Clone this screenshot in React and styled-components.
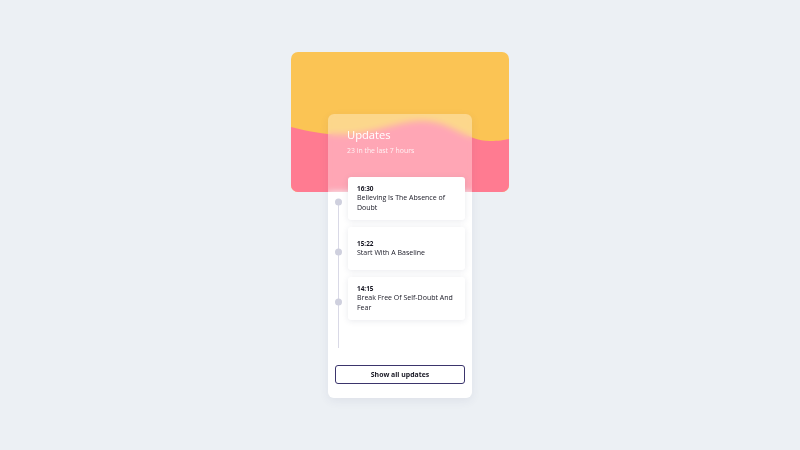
import React from "react";
import styled, { createGlobalStyle } from "styled-components";

const Global = createGlobalStyle`
  html, body { margin: 0; padding: 0; }
  body {
    background: #ecf0f4;
    font-family: "Open Sans", "Noto Sans", sans-serif;
    width: 800px;
    height: 450px;
    overflow: hidden;
  }
`;

const Stage = styled.div`
  display: flex;
  flex-direction: column;
  align-items: center;
  padding-top: 52px;
`;

const Banner = styled.div`
  width: 218px;
  height: 140px;
  border-radius: 7px;
  overflow: hidden;
  background: #fbc454;
  display: flex;
`;

const Wave = styled.svg`
  display: block;
`;

const Card = styled.div`
  position: relative;
  z-index: 1;
  margin-top: -78px;
  width: 144px;
  height: 284px;
  box-sizing: border-box;
  border-radius: 6px;
  background: linear-gradient(
    to bottom,
    rgba(255, 255, 255, 0.33) 0,
    rgba(255, 255, 255, 0.33) 78px,
    #ffffff 78px
  );
  backdrop-filter: blur(3px);
  box-shadow: 0 3px 10px rgba(60, 70, 110, 0.08);
  display: flex;
  flex-direction: column;
  padding: 12px 7px 14px 7px;
`;

const Header = styled.div`
  padding-left: 12px;
  color: #fff;
  display: flex;
  flex-direction: column;
  gap: 1px;
`;

const Title = styled.div`
  font-size: 11.2px;
  line-height: 18px;
  font-weight: 400;
`;

const Subtitle = styled.div`
  font-size: 6.9px;
  line-height: 11px;
  color: rgba(255, 255, 255, 0.85);
`;

const Timeline = styled.div`
  margin-top: 21px;
  display: grid;
  grid-template-columns: 13px 1fr;
  flex: 1;
`;

const Rail = styled.div`
  position: relative;
  &::before {
    content: "";
    position: absolute;
    top: 24px;
    height: 147px;
    left: 3px;
    width: 1px;
    background: #d9d9e6;
  }
`;

const List = styled.div`
  display: flex;
  flex-direction: column;
  gap: 7px;
`;

const Item = styled.div`
  position: relative;
  height: 43px;
  box-sizing: border-box;
  background: #fff;
  border-radius: 3px;
  box-shadow: 0 1px 6px rgba(40, 50, 90, 0.1);
  padding: 0 7px 0 9px;
  display: flex;
  flex-direction: column;
  justify-content: center;
  &::before {
    content: "";
    position: absolute;
    left: -13.5px;
    top: 25px;
    width: 7px;
    height: 7px;
    border-radius: 50%;
    background: #cfd0de;
    transform: translateY(-50%);
  }
`;

const Time = styled.div`
  font-size: 6.4px;
  line-height: 9px;
  font-weight: 700;
  color: #161622;
`;

const ItemTitle = styled.div`
  font-size: 7px;
  line-height: 10px;
  color: #181824;
`;

const Button = styled.button`
  margin-top: auto;
  height: 19px;
  width: 130px;
  box-sizing: border-box;
  border: 1.5px solid #3b356c;
  border-radius: 3px;
  background: #fff;
  font-family: "Open Sans", "Noto Sans", sans-serif;
  font-weight: 700;
  font-size: 6.9px;
  color: #161622;
  padding: 0;
`;

const items = [
  { time: "16:30", title: "Believing Is The Absence of Doubt" },
  { time: "15:22", title: "Start With A Baseline" },
  { time: "14:15", title: "Break Free Of Self-Doubt And Fear" },
];

export default function App() {
  return (
    <>
      <Global />
      <Stage>
        <Banner>
          <Wave width="218" height="140" viewBox="0 0 218 140">
            <path
              d="M0 75 C 20 80, 40 84, 60 82 C 90 79, 110 68, 134 69 C 160 70, 175 89, 199 89 C 208 89, 213 88, 218 87 L218 140 L0 140 Z"
              fill="#ff7b91"
            />
          </Wave>
        </Banner>
        <Card>
          <Header>
            <Title>Updates</Title>
            <Subtitle>23 in the last 7 hours</Subtitle>
          </Header>
          <Timeline>
            <Rail />
            <List>
              {items.map((it) => (
                <Item key={it.time}>
                  <Time>{it.time}</Time>
                  <ItemTitle>{it.title}</ItemTitle>
                </Item>
              ))}
            </List>
          </Timeline>
          <Button>Show all updates</Button>
        </Card>
      </Stage>
    </>
  );
}
